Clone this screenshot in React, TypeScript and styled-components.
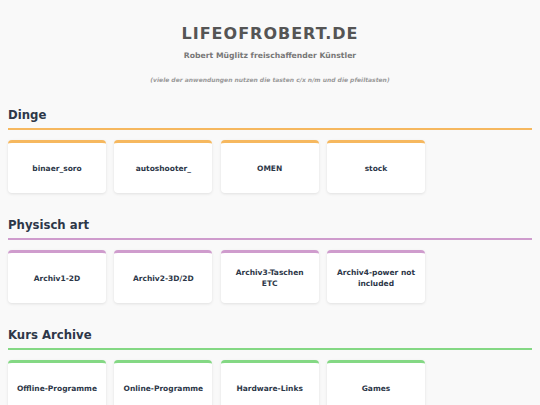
import React from "react";
import styled, { createGlobalStyle } from "styled-components";

const Global = createGlobalStyle`
  html, body { margin: 0; padding: 0; background: #f9f9f9; }
  body { font-family: "DejaVu Sans", Verdana, sans-serif; }
`;

const Page = styled.div`
  padding: 24px 8px 0;
`;

const Header = styled.header`
  text-align: center;
  display: flex;
  flex-direction: column;
  align-items: center;
`;

const Title = styled.h1`
  margin: 0;
  font-size: 16px;
  line-height: 20px;
  font-weight: bold;
  letter-spacing: 1px;
  color: #555;
`;

const Subtitle = styled.p`
  margin: 7px 0 0;
  font-size: 7.7px;
  line-height: 10px;
  font-weight: bold;
  color: #777;
`;

const Note = styled.p`
  margin: 14.5px 0 0;
  font-size: 6px;
  line-height: 8px;
  font-weight: bold;
  font-style: italic;
  color: #999;
`;

const Section = styled.section`
  margin-top: 24.5px;
`;

const Heading = styled.h2<{ $accent: string }>`
  margin: 0;
  font-size: 11.7px;
  line-height: 15px;
  font-weight: bold;
  color: #2d3748;
  padding-bottom: 5.4px;
  border-bottom: 2px solid ${(p) => p.$accent};
`;

const Cards = styled.div`
  display: flex;
  flex-wrap: wrap;
  gap: 8.33px;
  margin-top: 10px;
`;

const Card = styled.a<{ $accent: string }>`
  box-sizing: border-box;
  width: 98px;
  height: 53px;
  padding: 0 8px;
  display: flex;
  align-items: center;
  justify-content: center;
  text-align: center;
  background: #fff;
  border-top: 3px solid ${(p) => p.$accent};
  border-radius: 4px;
  box-shadow: 0 1px 3px rgba(0, 0, 0, 0.1);
  font-size: 7.5px;
  line-height: 11.3px;
  font-weight: bold;
  color: #2d3748;
  text-decoration: none;
`;

const sections = [
  {
    title: "Dinge",
    accent: "#f6b85f",
    items: ["binaer_soro", "autoshooter_", "OMEN", "stock"],
  },
  {
    title: "Physisch art",
    accent: "#cf9ccd",
    items: ["Archiv1-2D", "Archiv2-3D/2D", "Archiv3-Taschen ETC", "Archiv4-power not included"],
  },
  {
    title: "Kurs Archive",
    accent: "#84d884",
    items: ["Offline-Programme", "Online-Programme", "Hardware-Links", "Games"],
  },
];

export default function App() {
  return (
    <>
      <Global />
      <Page>
        <Header>
          <Title>LIFEOFROBERT.DE</Title>
          <Subtitle>Robert Müglitz freischaffender Künstler</Subtitle>
          <Note>(viele der anwendungen nutzen die tasten c/x n/m und die pfeiltasten)</Note>
        </Header>
        {sections.map((s) => (
          <Section key={s.title}>
            <Heading $accent={s.accent}>{s.title}</Heading>
            <Cards>
              {s.items.map((it) => (
                <Card key={it} $accent={s.accent} href="#">
                  {it}
                </Card>
              ))}
            </Cards>
          </Section>
        ))}
      </Page>
    </>
  );
}
